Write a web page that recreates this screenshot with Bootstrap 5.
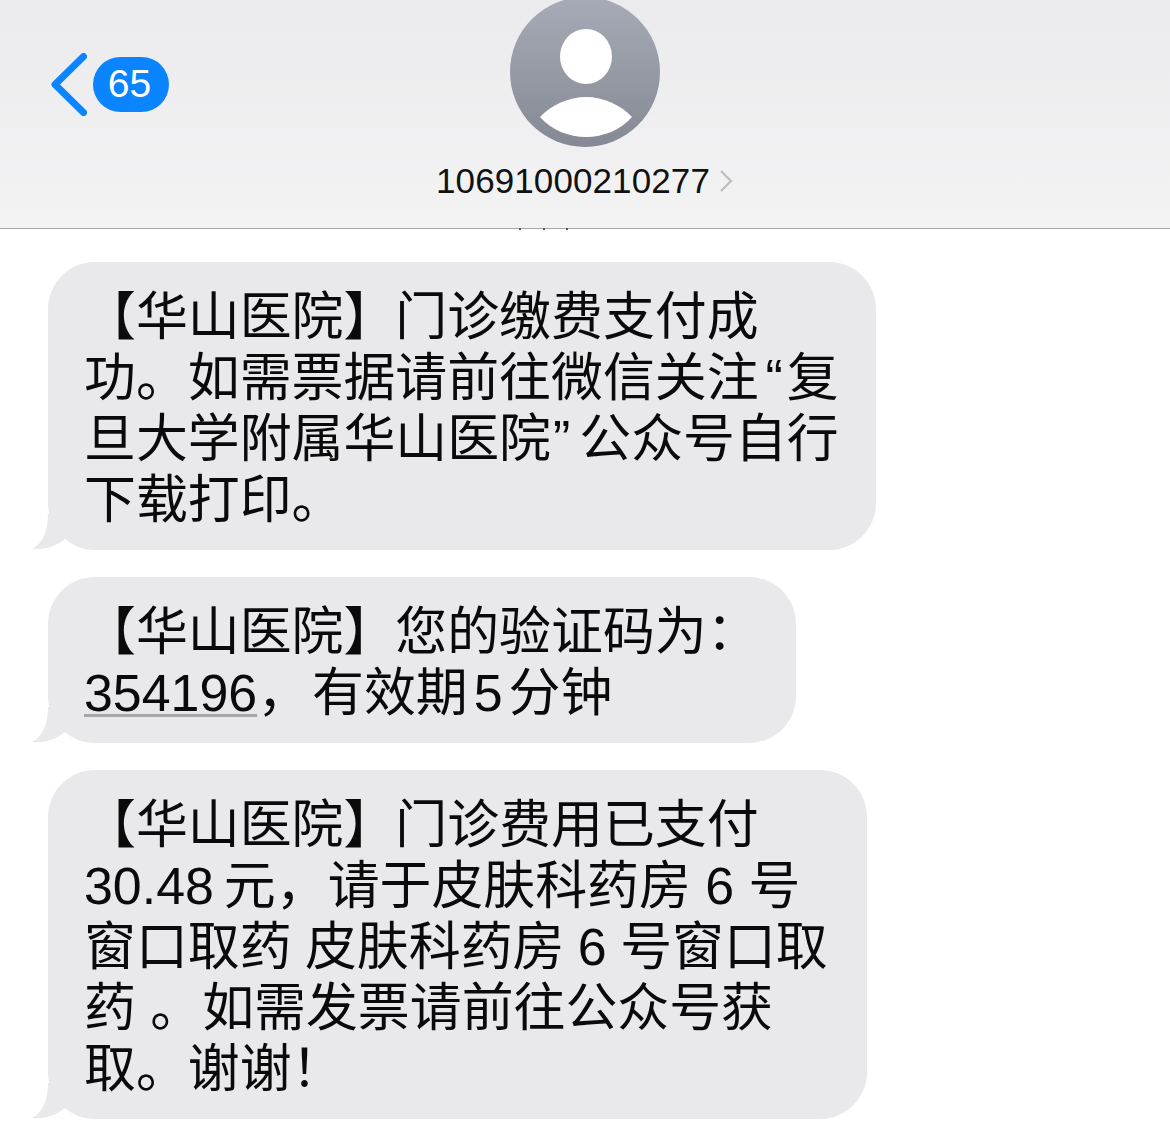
<!DOCTYPE html>
<html lang="zh-CN">
<head>
    <meta charset="UTF-8">
    <meta name="viewport" content="width=device-width, initial-scale=1.0">
    <title>短信</title>
    <link href="https://cdn.jsdelivr.net/npm/bootstrap@5.3.0/dist/css/bootstrap.min.css" rel="stylesheet">
    <style>
        body {
            background: #fff;
            color: #0a0a0a;
            font-family: "Liberation Sans", "Noto Sans CJK SC", sans-serif;
            overflow: hidden;
        }
        .sms-header {
            display: grid;
            grid-template-columns: 1fr auto 1fr;
            height: 229px;
            background: linear-gradient(180deg, #ebebed 0%, #f3f3f4 100%);
            border-bottom: 1px solid #a8a8a8;
            position: relative;
        }
        .back-group {
            margin: 53px 0 0 51px;
            height: 63px;
        }
        .count-pill {
            width: 76px;
            height: 55px;
            margin-left: 6px;
            padding-right: 3px;
            border-radius: 28px;
            background: #0a84ff;
            color: #fff;
            font-size: 39px;
        }
        .sender-num {
            margin-top: 14px;
            height: 40px;
            font-size: 35px;
            line-height: 40px;
            letter-spacing: .1px;
            color: #111;
        }
        .peek-dots {
            position: absolute;
            left: 519px;
            bottom: -2px;
            width: 49px;
        }
        .peek-dots i {
            width: 2px;
            height: 2px;
            background: #555;
        }
        .msg-list {
            padding: 33px 0 0 48px;
            gap: 27px;
        }
        .msg-bubble {
            position: relative;
            background: #e9e9eb;
            border-radius: 47px;
            padding: 25px 37px 19px 36px;
            font-size: 51.9px;
            line-height: 61px;
            white-space: nowrap;
        }
        .msg-bubble-last {
            padding-right: 39px;
        }
        .msg-tail {
            position: absolute;
            left: -16px;
            bottom: 0;
        }
        .code-link {
            text-decoration: underline;
            text-decoration-color: #a6a6a8;
            text-decoration-thickness: 3px;
            text-underline-offset: 3px;
        }
        .quote-open { padding: 0 4px 0 7px; }
        .quote-close { padding: 0 9px 0 2px; }
        .comma-gap { margin-right: 3px; }
        .digit-gap { margin: 0 6px; }
        .yuan-gap { margin-left: 10px; }
        .tight-words { word-spacing: -1px; }
    </style>
</head>
<body>
    <!-- Header -->
    <header class="sms-header">
        <div class="back-group d-flex align-items-center">
            <svg width="36" height="63" viewBox="0 0 36 63"><path d="M32.5 3.5 L4 31.5 L32.5 59.5" fill="none" stroke="#0a84ff" stroke-width="7" stroke-linecap="round" stroke-linejoin="round"/></svg>
            <div class="count-pill d-flex align-items-center justify-content-center">65</div>
        </div>
        <div class="d-flex flex-column align-items-center">
            <svg width="150" height="147" viewBox="0 0 150 147">
                <defs>
                    <linearGradient id="avatarFill" x1="0" y1="0" x2="0" y2="1">
                        <stop offset="0" stop-color="#a7abb7"/>
                        <stop offset="1" stop-color="#858993"/>
                    </linearGradient>
                </defs>
                <circle cx="75" cy="72" r="75" fill="url(#avatarFill)"/>
                <ellipse cx="76" cy="56.5" rx="26" ry="27.5" fill="#fff"/>
                <path d="M30 117 C41 105 59 97 76 97 C93 97 111 105 122 117 C111 130 93 137 76 137 C59 137 41 130 30 117Z" fill="#fff"/>
            </svg>
            <div class="sender-num d-flex align-items-center">
                10691000210277
                <svg class="ms-2" width="16" height="24" viewBox="0 0 16 24"><path d="M3 2 L13 12 L3 22" fill="none" stroke="#bdbdbf" stroke-width="2.2"/></svg>
            </div>
        </div>
        <div></div>
        <div class="peek-dots d-flex justify-content-between"><i></i><i></i><i></i></div>
    </header>

    <!-- Messages -->
    <main class="msg-list d-flex flex-column align-items-start">
        <div class="msg-bubble">
            <svg class="msg-tail" width="40" height="36" viewBox="0 0 40 36"><path d="M16 0 C16 18 10 30 0 35 C12 36 24 33 34 24 L38 26 L34 0Z" fill="#e9e9eb"/></svg>
            【华山医院】门诊缴费支付成<br>功。如需票据请前往微信关注<span class="quote-open">“</span>复<br>旦大学附属华山医院<span class="quote-close">”</span>公众号自行<br>下载打印。
        </div>
        <div class="msg-bubble">
            <svg class="msg-tail" width="40" height="36" viewBox="0 0 40 36"><path d="M16 0 C16 18 10 30 0 35 C12 36 24 33 34 24 L38 26 L34 0Z" fill="#e9e9eb"/></svg>
            【华山医院】您的验证码为：<br><span class="code-link">354196</span><span class="comma-gap">，</span>有效期<span class="digit-gap">5</span>分钟
        </div>
        <div class="msg-bubble msg-bubble-last">
            <svg class="msg-tail" width="40" height="36" viewBox="0 0 40 36"><path d="M16 0 C16 18 10 30 0 35 C12 36 24 33 34 24 L38 26 L34 0Z" fill="#e9e9eb"/></svg>
            【华山医院】门诊费用已支付<br>30.48<span class="yuan-gap">元</span>，请于皮肤科药房 6 号<br><span class="tight-words">窗口取药 皮肤科药房 6 号窗口取</span><br>药 。如需发票请前往公众号获<br>取。谢谢！
        </div>
    </main>
</body>
</html>
